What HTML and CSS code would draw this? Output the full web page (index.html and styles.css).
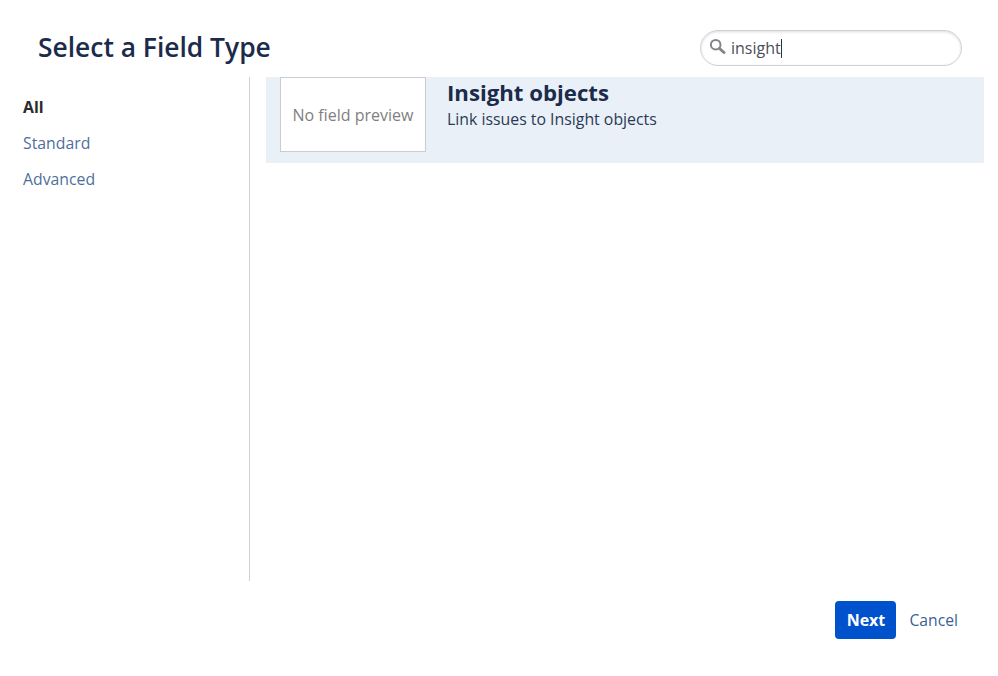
FILE: index.html
```html
<!DOCTYPE html>
<html lang="en">
<head>
    <meta charset="UTF-8">
    <title>Select a Field Type</title>
    <link rel="stylesheet" href="styles.css">
</head>
<body>

<div class="dialog">
    <header class="dialog-header">
        <h2>Select a Field Type</h2>
        <div class="search">
            <svg class="search-icon" width="17" height="17" viewBox="0 0 17 17">
                <circle cx="6.7" cy="6.7" r="4.8" fill="none" stroke="#80858b" stroke-width="2"/>
                <path d="M10.5 10.5l4.5 4" fill="none" stroke="#80858b" stroke-width="3" stroke-linecap="round"/>
            </svg>
            <span class="search-text">insight</span><span class="caret"></span>
        </div>
    </header>

    <div class="dialog-body">
        <nav class="sidebar">
            <a class="nav-item active">All</a>
            <a class="nav-item">Standard</a>
            <a class="nav-item">Advanced</a>
        </nav>
        <main class="results">
            <div class="field-row">
                <div class="preview">No field preview</div>
                <div class="field-info">
                    <h3>Insight objects</h3>
                    <p>Link issues to Insight objects</p>
                </div>
            </div>
        </main>
    </div>

    <footer class="dialog-footer">
        <button class="btn-next">Next</button>
        <a class="btn-cancel">Cancel</a>
    </footer>
</div>

</body>
</html>
```

FILE: styles.css
```css
* {
    box-sizing: border-box;
}

body {
    margin: 0;
    font-family: 'Open Sans', 'Noto Sans', sans-serif;
    background: #fff;
    color: #172b4d;
}

.dialog {
    width: 998px;
    height: 676px;
    display: flex;
    flex-direction: column;
}

.dialog-header {
    height: 77px;
    flex: none;
    display: flex;
    justify-content: space-between;
    align-items: flex-start;
    padding: 29px 36px 0 38px;
}

h2 {
    margin: 0;
    font-size: 26.4px;
    line-height: 36px;
    font-weight: 600;
    color: #1b2b4b;
}

.search {
    width: 262px;
    height: 36px;
    margin-top: 1px;
    padding-left: 8px;
    display: flex;
    align-items: center;
    border: 1px solid #cfd1d3;
    border-radius: 18px;
    box-shadow: inset 0 1px 3px #dcdcdc;
    font-size: 16px;
    color: #4a4f57;
}

.search-icon {
    margin-right: 5px;
    margin-top: -3px;
}

.caret {
    width: 1px;
    height: 19px;
    background: #333;
}

.dialog-body {
    height: 504px;
    flex: none;
    display: flex;
}

.sidebar {
    width: 250px;
    flex: none;
    padding: 18px 0 0 23px;
    border-right: 1px solid #cfd1d4;
    display: flex;
    flex-direction: column;
    gap: 12px;
}

.nav-item {
    font-size: 15.8px;
    line-height: 24px;
    color: #4f6f9b;
}

.nav-item.active {
    font-weight: 700;
    color: #2b2b2b;
}

.results {
    flex: 1;
    padding: 0 14px 0 16px;
}

.field-row {
    height: 86px;
    display: flex;
    padding-left: 14px;
    background: #e9f0f8;
}

.preview {
    width: 146px;
    height: 75px;
    display: flex;
    align-items: center;
    justify-content: center;
    background: #fff;
    border: 1px solid #c9ccd1;
    font-size: 16px;
    color: #7f7f7f;
}

.field-info {
    margin-left: 21px;
}

h3 {
    margin: 1px 0 0;
    font-size: 22.2px;
    line-height: 30px;
    font-weight: 700;
    color: #1b2b4b;
}

p {
    margin: 0;
    font-size: 15.85px;
    line-height: 22px;
    color: #2b3a55;
}

.dialog-footer {
    display: flex;
    justify-content: flex-end;
    align-items: center;
    padding: 20px 40px 0 0;
    gap: 13px;
}

.btn-next {
    width: 61px;
    height: 38px;
    border: none;
    border-radius: 4px;
    background: #0052cc;
    color: #fff;
    font-family: inherit;
    font-size: 16px;
    font-weight: 700;
}

.btn-cancel {
    font-size: 15.7px;
    color: #3b5f94;
}
```
